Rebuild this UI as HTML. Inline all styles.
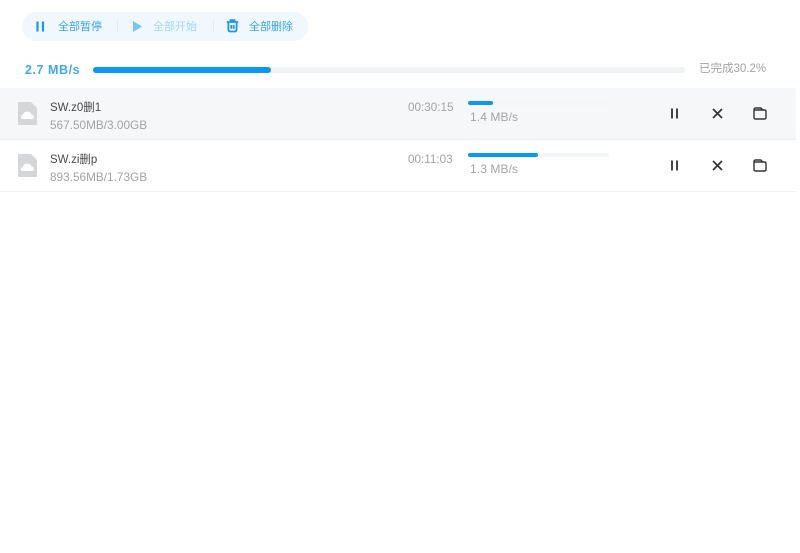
<!DOCTYPE html>
<html><head><meta charset="utf-8"><style>
html,body{margin:0;padding:0;background:#fff}
body{width:800px;height:553px;position:relative;overflow:hidden;font-family:"Liberation Sans","Noto Sans CJK SC",sans-serif;filter:blur(.3px)}
.a{position:absolute;white-space:nowrap;line-height:16px}
.b{position:absolute;border-radius:3px}
svg{position:absolute;overflow:visible}
</style></head><body>
<div class="b" style="left:22px;top:12px;width:286px;height:29px;border-radius:15px;background:#f0f8fe"></div>
<svg style="left:36px;top:21px" width="10" height="12"><path d="M1.5 0.5V10.5M7 0.5V10.5" stroke="#1a97ea" stroke-width="2.2"/></svg>
<div class="a" style="left:58px;top:19px;font-size:11px;color:#3aa3ea">全部暂停</div>
<div class="b" style="left:117px;top:20px;width:1px;height:13px;background:#deedf7;border-radius:0"></div>
<svg style="left:133px;top:21px" width="10" height="12"><path d="M0 0L9 5.5L0 11Z" fill="#7cc3f2"/></svg>
<div class="a" style="left:153px;top:19px;font-size:11px;color:#a3d5f5">全部开始</div>
<div class="b" style="left:213px;top:20px;width:1px;height:13px;background:#deedf7;border-radius:0"></div>
<svg style="left:226px;top:19px" width="13" height="14"><path d="M.8 3H12.2M4.5 3V1.2H8.5V3M2.4 3V10.5Q2.4 12.5 4.4 12.5H8.6Q10.6 12.5 10.6 10.5V3M5.3 6V9.8M7.7 6V9.8" fill="none" stroke="#1a97ea" stroke-width="1.8"/></svg>
<div class="a" style="left:249px;top:19px;font-size:11px;color:#3aa3ea">全部删除</div>

<div class="a" style="left:25px;top:62px;font-size:12.5px;font-weight:bold;color:#3fa9f0;letter-spacing:.55px">2.7 MB/s</div>
<div class="b" style="left:93px;top:67px;width:592px;height:6px;background:#f1f2f4"></div>
<div class="b" style="left:93px;top:67px;width:178px;height:6px;background:#0a98f2"></div>
<div class="a" style="left:699px;top:61px;font-size:11.5px;color:#a3a3a3">已完成30.2%</div>

<div style="position:absolute;left:0;top:88px;width:796px;height:51px;background:#f6f7f9;border-bottom:1px solid #f0f0f2"></div>
<div style="position:absolute;left:0;top:140px;width:796px;height:51px;background:#fff;border-bottom:1px solid #f0f0f2"></div>

<svg style="left:16.5px;top:102px" width="20" height="24"><path d="M2 0H14L20 6V22Q20 23 19 23H2Q1 23 1 22V1Q1 0 2 0Z" fill="#d5d6d8"/><path d="M6 17C3 17 3 13.2 5.8 13C6.5 8.8 13 8.4 14.5 12.5C17.8 12.5 17.8 17 15 17Z" fill="#fff"/></svg>
<div class="a" style="left:50px;top:100px;font-size:11.5px;color:#4a4a4a">SW.z0删1</div>
<div class="a" style="left:50px;top:117px;font-size:11.8px;color:#a3a3a3">567.50MB/3.00GB</div>
<div class="a" style="left:408px;top:100px;font-size:11.7px;color:#a3a3a3">00:30:15</div>
<div class="b" style="left:468px;top:101px;width:141px;height:4px;background:#f4f5f7"></div>
<div class="b" style="left:468px;top:101px;width:25px;height:4px;background:#0a98f2"></div>
<div class="a" style="left:470px;top:109px;font-size:12px;color:#a3a3a3;letter-spacing:.1px">1.4 MB/s</div>
<svg style="left:670px;top:108px" width="10" height="11"><path d="M2 .5V10.5M7 .5V10.5" stroke="#444" stroke-width="2"/></svg>
<svg style="left:712px;top:108px" width="11" height="11"><path d="M1 1L10 10M10 1L1 10" stroke="#333" stroke-width="1.7"/></svg>
<svg style="left:753px;top:107px" width="14" height="13"><path d="M1 3V10.5Q1 12 2.5 12H11.5Q13 12 13 10.5V4.5Q13 3 11.5 3H1ZM1 3Q1 1 2.5 1H7.5Q8.5 1 9.5 3" fill="none" stroke="#333" stroke-width="1.4"/></svg>

<svg style="left:16.5px;top:154px" width="20" height="24"><path d="M2 0H14L20 6V22Q20 23 19 23H2Q1 23 1 22V1Q1 0 2 0Z" fill="#d5d6d8"/><path d="M6 17C3 17 3 13.2 5.8 13C6.5 8.8 13 8.4 14.5 12.5C17.8 12.5 17.8 17 15 17Z" fill="#fff"/></svg>
<div class="a" style="left:50px;top:152px;font-size:11.5px;color:#4a4a4a">SW.zi删p</div>
<div class="a" style="left:50px;top:169px;font-size:11.8px;color:#a3a3a3">893.56MB/1.73GB</div>
<div class="a" style="left:408px;top:152px;font-size:11.7px;color:#a3a3a3">00:11:03</div>
<div class="b" style="left:468px;top:153px;width:141px;height:4px;background:#f4f5f7"></div>
<div class="b" style="left:468px;top:153px;width:70px;height:4px;background:#0a98f2"></div>
<div class="a" style="left:470px;top:161px;font-size:12px;color:#a3a3a3;letter-spacing:.1px">1.3 MB/s</div>
<svg style="left:670px;top:160px" width="10" height="11"><path d="M2 .5V10.5M7 .5V10.5" stroke="#444" stroke-width="2"/></svg>
<svg style="left:712px;top:160px" width="11" height="11"><path d="M1 1L10 10M10 1L1 10" stroke="#333" stroke-width="1.7"/></svg>
<svg style="left:753px;top:159px" width="14" height="13"><path d="M1 3V10.5Q1 12 2.5 12H11.5Q13 12 13 10.5V4.5Q13 3 11.5 3H1ZM1 3Q1 1 2.5 1H7.5Q8.5 1 9.5 3" fill="none" stroke="#333" stroke-width="1.4"/></svg>
</body></html>
